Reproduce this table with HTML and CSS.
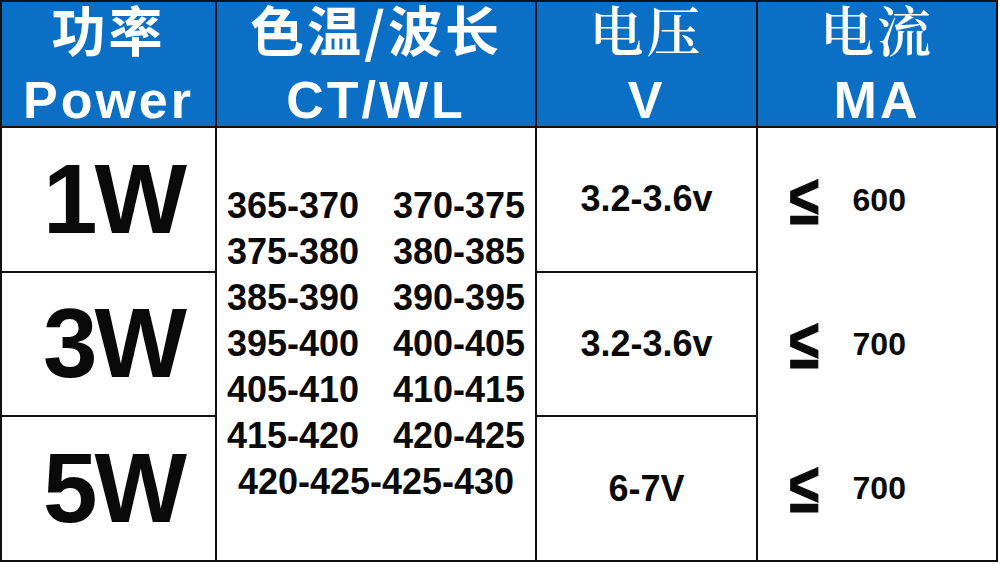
FILE: index.html
```html
<!DOCTYPE html>
<html lang="zh">
<head>
<meta charset="utf-8">
<title>Power table</title>
<link rel="stylesheet" href="styles.css">
</head>
<body>
<div class="table">
  <div class="cell head"><div class="zh">功率</div><div class="en">Power</div></div>
  <div class="cell head"><div class="zh">色温/波长</div><div class="en">CT/WL</div></div>
  <div class="cell head"><div class="zh serif">电压</div><div class="en">V</div></div>
  <div class="cell head"><div class="zh serif">电流</div><div class="en">MA</div></div>

  <div class="cell power r2">1W</div>
  <div class="cell wl">
    <div class="line"><span>365-370</span><span>370-375</span></div>
    <div class="line"><span>375-380</span><span>380-385</span></div>
    <div class="line"><span>385-390</span><span>390-395</span></div>
    <div class="line"><span>395-400</span><span>400-405</span></div>
    <div class="line"><span>405-410</span><span>410-415</span></div>
    <div class="line"><span>415-420</span><span>420-425</span></div>
    <div class="line single"><span>420-425-425-430</span></div>
  </div>
  <div class="cell volt r2">3.2-3.6v</div>
  <div class="cell ma">
    <div class="ma-item"><span class="le">≤</span><span class="num">600</span></div>
    <div class="ma-item"><span class="le">≤</span><span class="num">700</span></div>
    <div class="ma-item"><span class="le">≤</span><span class="num">700</span></div>
  </div>

  <div class="cell power r3">3W</div>
  <div class="cell volt r3">3.2-3.6v</div>

  <div class="cell power r4">5W</div>
  <div class="cell volt r4">6-7V</div>
</div>
</body>
</html>
```

FILE: styles.css
```css
html, body {
  margin: 0;
  padding: 0;
  background: #ffffff;
}

.table {
  display: grid;
  box-sizing: border-box;
  width: 998px;
  height: 562px;
  padding: 2px;
  gap: 2px;
  background: #111111;
  grid-template-columns: 213px 318px 219px 238px;
  grid-template-rows: 124px 1fr 1fr 1fr;
  font-family: "Liberation Sans", Arial, "Noto Sans CJK SC", sans-serif;
  color: #0a0a0a;
}

.cell {
  background: #ffffff;
}

.head {
  background: #0b6fc5;
  color: #ffffff;
  display: flex;
  flex-direction: column;
  align-items: center;
  font-weight: bold;
}

.zh {
  font-family: "Noto Sans CJK SC", sans-serif;
  font-size: 54px;
  line-height: 54px;
  letter-spacing: 3px;
  font-weight: 700;
}

.zh.serif {
  font-family: "Noto Serif CJK SC", "Noto Sans CJK SC", serif;
  font-weight: 600;
}

.en {
  font-family: "Liberation Sans", Arial, sans-serif;
  font-size: 52px;
  line-height: 50px;
  margin-top: 19px;
  letter-spacing: 3px;
}

.power {
  grid-column: 1;
  display: flex;
  align-items: center;
  justify-content: center;
  padding-left: 10px;
  font-size: 98px;
  font-weight: bold;
  letter-spacing: -3px;
}

.r2 { grid-row: 2; }
.r3 { grid-row: 3; }
.r4 { grid-row: 4; }

.wl {
  grid-column: 2;
  grid-row: 2 / 5;
  display: flex;
  flex-direction: column;
  justify-content: center;
  font-size: 36px;
  font-weight: bold;
}

.line {
  display: flex;
  justify-content: center;
  gap: 34px;
  line-height: 46px;
}

.volt {
  grid-column: 3;
  display: flex;
  align-items: center;
  justify-content: center;
  font-size: 36px;
  font-weight: bold;
}

.ma {
  grid-column: 4;
  grid-row: 2 / 5;
  display: flex;
  flex-direction: column;
}

.ma-item {
  flex: 1;
  display: flex;
  align-items: center;
  padding-left: 32px;
  gap: 34px;
  font-weight: bold;
}

.le {
  display: inline-block;
  font-size: 52px;
  line-height: 1;
  transform: scale(1.05, 1.35);
  -webkit-text-stroke: 0.8px #0a0a0a;
}

.num {
  font-size: 32px;
}
```
